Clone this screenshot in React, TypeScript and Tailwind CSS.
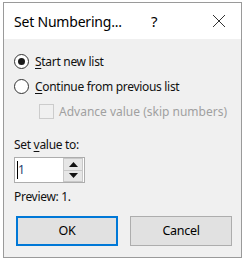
import React from "react";

const font = { fontFamily: '"Noto Sans", "Open Sans", sans-serif' };

// 单选按钮
const Radio: React.FC<{ checked?: boolean }> = ({ checked }) => (
  <span className="w-[15px] h-[15px] rounded-full border border-[#333333] bg-white flex items-center justify-center shrink-0">
    {checked && <span className="w-[7px] h-[7px] rounded-full bg-[#1a1a1a]" />}
  </span>
);

const App: React.FC = () => {
  return (
    <div className="w-[245px] h-[258px] bg-white pl-[3px] pt-[2px]" style={font}>
      <div className="w-[239px] h-[256px] border border-[#9a9a9a] bg-[#f0f0f0] flex flex-col">
        {/* 标题栏 */}
        <div className="h-[36px] bg-white flex items-center pl-[10px] text-[14px] tracking-[-0.2px] text-black">
          <span className="w-[137px]">Set Numbering...</span>
          <span className="w-[50px] text-[15px]">?</span>
          <svg width="14" height="14" viewBox="0 0 14 14" className="ml-[11px]">
            <path d="M1 1 L13 13 M13 1 L1 13" stroke="#333" strokeWidth="1" />
          </svg>
        </div>

        {/* 内容 */}
        <div className="flex flex-col pl-[10px] pr-[6px] pt-[10px] text-[12px] tracking-[-0.3px] text-[#111] whitespace-nowrap">
          <div className="h-[25px] flex items-center gap-[6px]">
            <Radio checked />
            <span>
              <u className="underline-offset-2">S</u>tart new list
            </span>
          </div>
          <div className="h-[25px] flex items-center gap-[6px]">
            <Radio />
            <span>
              <u className="underline-offset-2">C</u>ontinue from previous list
            </span>
          </div>
          <div className="h-[25px] flex items-center gap-[5px] pl-[25px]">
            <span className="w-[15px] h-[15px] border border-[#cccccc] bg-[#f0f0f0] shrink-0" />
            <span className="text-[#a0a0a0] tracking-normal">Advance value (skip numbers)</span>
          </div>

          <div className="mt-[13px] h-[16px] leading-[16px]">
            Set <u className="underline-offset-2">v</u>alue to:
          </div>

          <div className="mt-[4px] w-[71px] h-[26px] border border-[#adadad] bg-white flex items-center">
            <div className="flex-1 flex items-center pl-[2px]">
              <span className="w-px h-[18px] bg-black" />
              <span className="text-[12px] text-[#1f3f6f]">1</span>
            </div>
            <div className="w-[20px] h-[24px] flex flex-col mr-[1px]">
              <div className="flex-1 bg-[#e6e6e6] border border-[#c8c8c8] flex items-center justify-center">
                <svg width="9" height="5" viewBox="0 0 9 5">
                  <path d="M0 5 L4.5 0 L9 5 Z" fill="#111" />
                </svg>
              </div>
              <div className="flex-1 bg-[#e6e6e6] border border-t-0 border-[#c8c8c8] flex items-center justify-center">
                <svg width="9" height="5" viewBox="0 0 9 5">
                  <path d="M0 0 L9 0 L4.5 5 Z" fill="#111" />
                </svg>
              </div>
            </div>
          </div>

          <div className="mt-[6px] h-[16px] leading-[16px]">Preview: 1.</div>

          <div className="mt-[11px] flex gap-[12px] pl-[2px]">
            <button className="w-[102px] h-[30px] border-2 border-[#0078d7] bg-[#e1e1e1] text-[12.5px] text-black">
              OK
            </button>
            <button className="w-[102px] h-[30px] border border-[#adadad] bg-[#e1e1e1] text-[12.5px] text-black">
              Cancel
            </button>
          </div>
        </div>
      </div>
    </div>
  );
};

export default App;
